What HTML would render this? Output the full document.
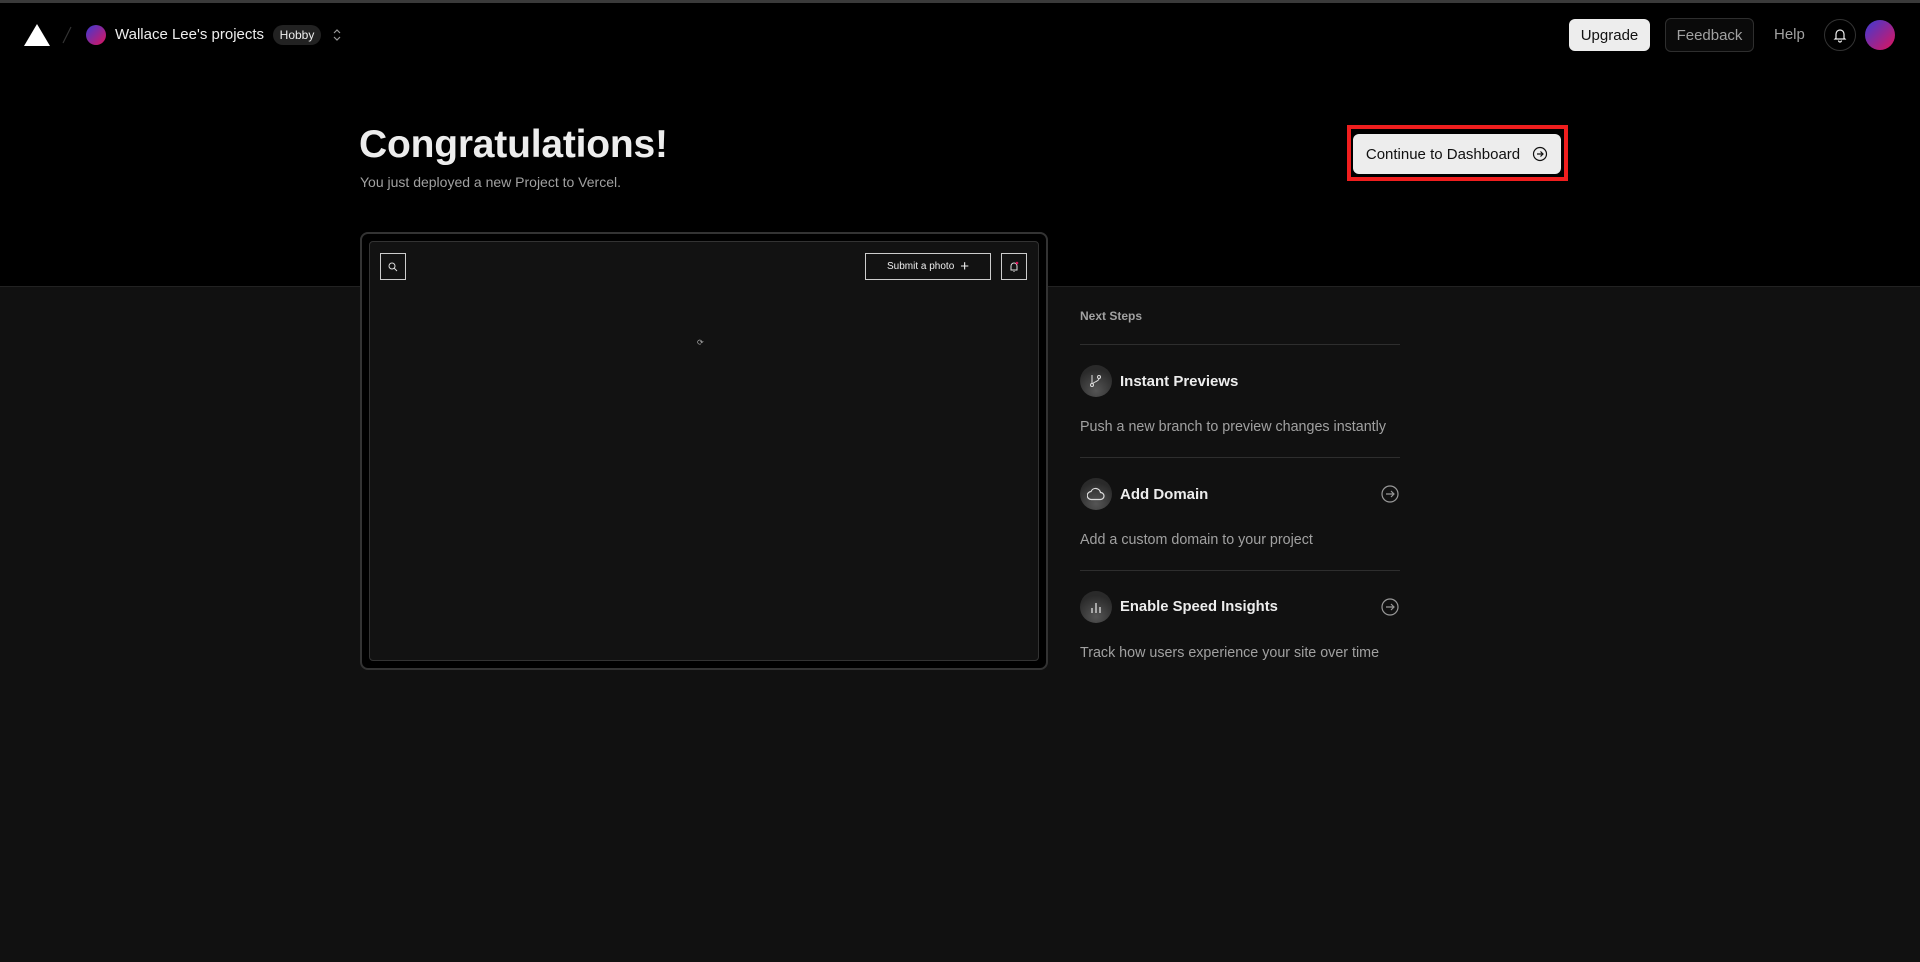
<!DOCTYPE html>
<html><head><meta charset="utf-8"><style>
*{margin:0;padding:0;box-sizing:border-box}
body{width:1920px;height:962px;background:#111;font-family:"Liberation Sans",sans-serif;position:relative;overflow:hidden;color:#ededed}
.a{position:absolute}
.top{left:0;top:0;width:1920px;height:287px;background:#000;border-top:3px solid #3a3a3a;border-bottom:1px solid #222}
.btn{display:flex;align-items:center;justify-content:center;border-radius:6px;font-size:15px}
.ic{width:32px;height:32px;border-radius:50%;background:radial-gradient(circle at 50% 80%,#555,#2a2a2a 70%);display:flex;align-items:center;justify-content:center}
.t{font-size:15px;font-weight:bold;color:#ededed}
.d{font-size:14.3px;color:#a1a1a1}
.hr{left:1080px;width:320px;height:1px;background:#2e2e2e}
</style></head><body>
<div class="a top"></div>
<svg class="a" style="left:24px;top:24px" width="26" height="22"><polygon points="13,0 26,22 0,22" fill="#fff"/></svg>
<svg class="a" style="left:62px;top:26px" width="10" height="18"><line x1="9" y1="1" x2="1" y2="17" stroke="#333" stroke-width="1.2"/></svg>
<div class="a" style="left:86px;top:25px;width:20px;height:20px;border-radius:50%;background:linear-gradient(135deg,#3b3bd6,#e0135a)"></div>
<div class="a" style="left:115px;top:26px;font-size:15px;color:#ededed">Wallace Lee's projects</div>
<div class="a" style="left:273px;top:25px;width:48px;height:20px;border-radius:10px;background:#222;font-size:12px;color:#ededed;text-align:center;line-height:20px">Hobby</div>
<svg class="a" style="left:332px;top:27px" width="10" height="16"><path d="M2 6l3-3 3 3M2 10l3 3 3-3" stroke="#999" fill="none" stroke-width="1.2"/></svg>
<div class="a btn" style="left:1569px;top:19px;width:81px;height:32px;background:#ededed;color:#111">Upgrade</div>
<div class="a btn" style="left:1665px;top:18px;width:89px;height:34px;background:#0a0a0a;border:1px solid #2e2e2e;color:#a1a1a1">Feedback</div>
<div class="a" style="left:1774px;top:26px;font-size:15px;color:#a1a1a1">Help</div>
<div class="a" style="left:1824px;top:19px;width:32px;height:32px;border-radius:50%;border:1px solid #333;display:flex;align-items:center;justify-content:center"><svg width="16" height="16" viewBox="0 0 16 16"><path d="M4 11V7a4 4 0 018 0v4l1 1H3zM6.5 13.5a1.5 1.5 0 003 0" stroke="#ededed" fill="none" stroke-width="1.2"/></svg></div>
<div class="a" style="left:1865px;top:20px;width:30px;height:30px;border-radius:50%;background:linear-gradient(135deg,#3b3bd6,#e0135a)"></div>

<div class="a" style="left:359px;top:123px;font-size:39px;font-weight:bold;color:#ededed;letter-spacing:-0.2px">Congratulations!</div>
<div class="a" style="left:360px;top:174px;font-size:14px;color:#a1a1a1">You just deployed a new Project to Vercel.</div>
<div class="a" style="left:1347px;top:125px;width:221px;height:56px;border:4px solid #f01e1e"></div>
<div class="a btn" style="left:1353px;top:134px;width:208px;height:40px;background:#ededed;color:#111;gap:12px">Continue to Dashboard <svg width="16" height="16" viewBox="0 0 16 16"><circle cx="8" cy="8" r="6.5" stroke="#111" fill="none" stroke-width="1.2"/><path d="M5 8h6M8.5 5.5L11 8l-2.5 2.5" stroke="#111" fill="none" stroke-width="1.2"/></svg></div>

<div class="a" style="left:360px;top:232px;width:688px;height:438px;background:#000;border:2px solid #333;border-radius:8px"></div>
<div class="a" style="left:369px;top:241px;width:670px;height:420px;background:#121212;border:1px solid #333;border-radius:4px"></div>
<div class="a" style="left:380px;top:253px;width:26px;height:27px;border:1px solid #ccc;display:flex;align-items:center;justify-content:center"><svg width="10" height="10"><circle cx="4" cy="4" r="3" stroke="#ddd" fill="none"/><path d="M6 6l3 3" stroke="#ddd"/></svg></div>
<div class="a" style="left:865px;top:253px;width:126px;height:27px;border:1px solid #ccc;font-size:10px;color:#eee;display:flex;align-items:center;justify-content:center;gap:6px">Submit a photo <span style="font-size:15px">+</span></div>
<div class="a" style="left:1001px;top:253px;width:26px;height:27px;border:1px solid #ccc;display:flex;align-items:center;justify-content:center"><svg width="10" height="12"><path d="M2 9V5a3 3 0 016 0v4zM5 10v1" stroke="#ddd" fill="none"/><circle cx="8" cy="2" r="1.3" fill="#e0135a"/></svg></div>
<div class="a" style="left:697px;top:338px;font-size:8px;color:#aaa">⟳</div>

<div class="a" style="left:1080px;top:309px;font-size:12px;font-weight:bold;color:#a1a1a1">Next Steps</div>
<div class="a hr" style="top:344px"></div>
<div class="a ic" style="left:1080px;top:365px"><svg width="16" height="16" viewBox="0 0 16 16"><circle cx="4" cy="12" r="1.5" stroke="#ddd" fill="none"/><circle cx="11" cy="4" r="1.5" stroke="#ddd" fill="none"/><path d="M4 2v8.5M11 5.5c0 3-5 3-6.5 5.5" stroke="#ddd" fill="none"/></svg></div>
<div class="a t" style="left:1120px;top:373px">Instant Previews</div>
<div class="a d" style="left:1080px;top:419px">Push a new branch to preview changes instantly</div>
<div class="a hr" style="top:457px"></div>
<div class="a ic" style="left:1080px;top:478px"><svg width="18" height="14" viewBox="0 0 18 14"><path d="M4.5 12.5h9a3.5 3.5 0 000-7 5 5 0 00-9.5-1A3.5 3.5 0 004.5 12.5z" stroke="#ddd" fill="none" stroke-width="1.2"/></svg></div>
<div class="a t" style="left:1120px;top:486px">Add Domain</div>
<svg class="a" style="left:1381px;top:485px" width="18" height="18" viewBox="0 0 18 18"><circle cx="9" cy="9" r="8" stroke="#999" fill="none" stroke-width="1.2"/><path d="M5 9h8M10 6l3 3-3 3" stroke="#999" fill="none" stroke-width="1.2"/></svg>
<div class="a d" style="left:1080px;top:532px">Add a custom domain to your project</div>
<div class="a hr" style="top:570px"></div>
<div class="a ic" style="left:1080px;top:591px"><svg width="14" height="14" viewBox="0 0 14 14"><path d="M3 13V8M7 13V3M11 13V7" stroke="#ddd" stroke-width="1.3"/></svg></div>
<div class="a t" style="left:1120px;top:599px;font-size:14.8px">Enable Speed Insights</div>
<svg class="a" style="left:1381px;top:598px" width="18" height="18" viewBox="0 0 18 18"><circle cx="9" cy="9" r="8" stroke="#999" fill="none" stroke-width="1.2"/><path d="M5 9h8M10 6l3 3-3 3" stroke="#999" fill="none" stroke-width="1.2"/></svg>
<div class="a d" style="left:1080px;top:645px">Track how users experience your site over time</div>
</body></html>
